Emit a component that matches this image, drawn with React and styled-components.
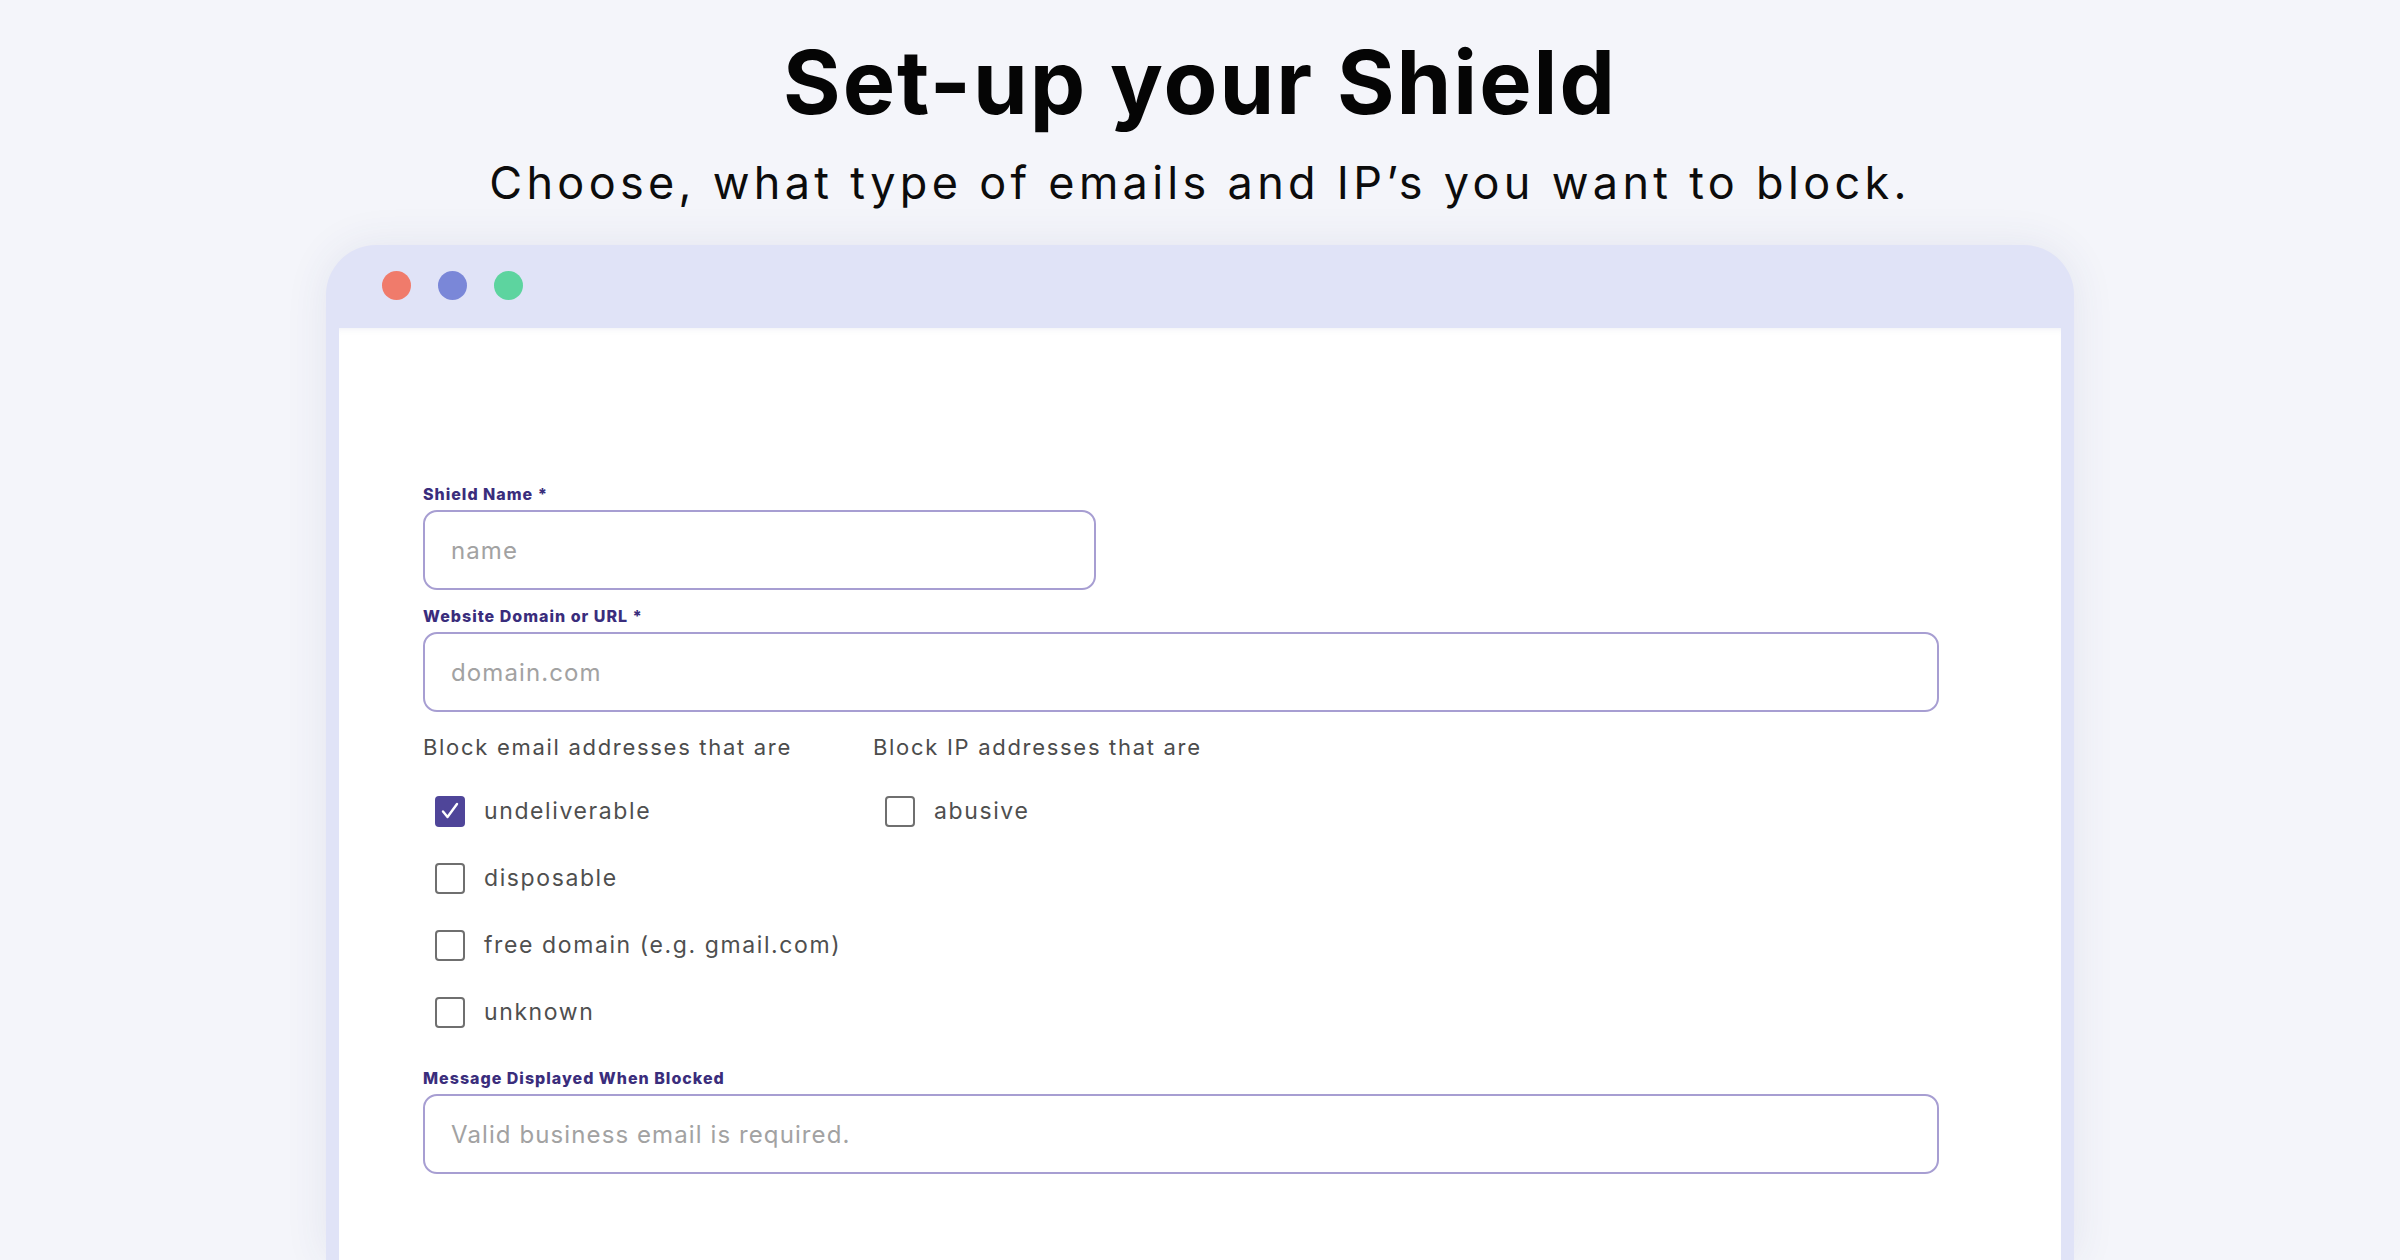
import React from 'react';
import styled, { createGlobalStyle } from 'styled-components';

const GlobalStyle = createGlobalStyle`
  html, body {
    margin: 0;
    padding: 0;
    background: #f4f5fa;
    height: 1260px;
    overflow: hidden;
  }
  body {
    font-family: Inter, "Noto Sans", sans-serif;
    color: #111;
  }
  * { box-sizing: border-box; }
`;

const Page = styled.div`
  display: flex;
  flex-direction: column;
  align-items: center;
  padding-top: 29px;
`;

const Title = styled.h1`
  margin: 0;
  font-size: 88px;
  line-height: 106px;
  font-weight: 700;
  color: #050505;
  letter-spacing: 2px;
`;

const Subtitle = styled.p`
  margin: 21px 0 0;
  font-size: 45px;
  line-height: 54px;
  font-weight: 400;
  color: #0c0c0c;
  letter-spacing: 4.3px;
`;

const Window = styled.div`
  margin-top: 35px;
  width: 1748px;
  height: 1015px;
  background: #e0e3f7;
  border-radius: 50px 50px 0 0;
  padding: 0 13px;
  display: flex;
  flex-direction: column;
  box-shadow: 0 0 44px rgba(60, 70, 120, 0.09);
`;

const TitleBar = styled.div`
  height: 83px;
  display: flex;
  align-items: center;
  gap: 27px;
  padding-left: 43px;
  padding-bottom: 2px;
`;

const Dot = styled.span`
  width: 29px;
  height: 29px;
  border-radius: 50%;
  background: ${({ color }) => color};
`;

const Body = styled.div`
  flex: 1;
  background: #fff;
  padding: 156px 0 0 84px;
  box-shadow: inset 0 6px 8px -8px rgba(120, 130, 180, 0.25);
`;

const FieldLabel = styled.label`
  display: block;
  font-size: 16px;
  line-height: 20px;
  font-weight: 800;
  color: #3a2d7c;
  margin-top: ${({ top }) => top || 0}px;
  letter-spacing: 1px;
`;

const Input = styled.div`
  margin-top: 6px;
  width: ${({ wide }) => (wide ? 1516 : 673)}px;
  height: 80px;
  border: 2.5px solid #a79ed2;
  border-radius: 14px;
  display: flex;
  align-items: center;
  padding-left: 26px;
  font-size: 24px;
  color: #a2a2a2;
  letter-spacing: 1.1px;
`;

const Options = styled.div`
  margin-top: 21px;
  display: grid;
  grid-template-columns: 450px auto;
`;

const Column = styled.div`
  display: flex;
  flex-direction: column;
`;

const GroupTitle = styled.div`
  font-size: 22px;
  line-height: 28px;
  color: #4c4c4c;
  letter-spacing: 1.7px;
  margin-bottom: 35px;
`;

const OptionList = styled.div`
  display: flex;
  flex-direction: column;
  gap: 37px;
`;

const OptionRow = styled.div`
  display: flex;
  align-items: center;
  height: 30px;
  padding-left: 12px;
  gap: 19px;
  font-size: 23px;
  color: #4f4f4f;
  letter-spacing: 1.6px;
`;

const Box = styled.span`
  width: 30px;
  height: 31px;
  border-radius: 4px;
  border: ${({ checked }) => (checked ? 'none' : '2.5px solid #6f6f6f')};
  background: ${({ checked }) => (checked ? '#4f4599' : '#fff')};
  display: flex;
  align-items: center;
  justify-content: center;
`;

const Check = () => (
  <svg width="24" height="24" viewBox="0 0 24 24">
    <path d="M5 12.5 L9.5 18 L19 5" fill="none" stroke="#fff" strokeWidth="2.4" strokeLinecap="round" strokeLinejoin="round" />
  </svg>
);

const Option = ({ label, checked }) => (
  <OptionRow>
    <Box checked={checked}>{checked && <Check />}</Box>
    {label}
  </OptionRow>
);

export default function App() {
  return (
    <Page>
      <GlobalStyle />
      <Title>Set-up your Shield</Title>
      <Subtitle>Choose, what type of emails and IP’s you want to block.</Subtitle>
      <Window>
        <TitleBar>
          <Dot color="#f07b6b" />
          <Dot color="#7a87d8" />
          <Dot color="#5dd49f" />
        </TitleBar>
        <Body>
          <FieldLabel>Shield Name *</FieldLabel>
          <Input>name</Input>
          <FieldLabel top={16}>Website Domain or URL *</FieldLabel>
          <Input wide>domain.com</Input>
          <Options>
            <Column>
              <GroupTitle>Block email addresses that are</GroupTitle>
              <OptionList>
                <Option label="undeliverable" checked />
                <Option label="disposable" />
                <Option label="free domain (e.g. gmail.com)" />
                <Option label="unknown" />
              </OptionList>
            </Column>
            <Column>
              <GroupTitle>Block IP addresses that are</GroupTitle>
              <OptionList>
                <Option label="abusive" />
              </OptionList>
            </Column>
          </Options>
          <FieldLabel top={41}>Message Displayed When Blocked</FieldLabel>
          <Input wide>Valid business email is required.</Input>
        </Body>
      </Window>
    </Page>
  );
}
